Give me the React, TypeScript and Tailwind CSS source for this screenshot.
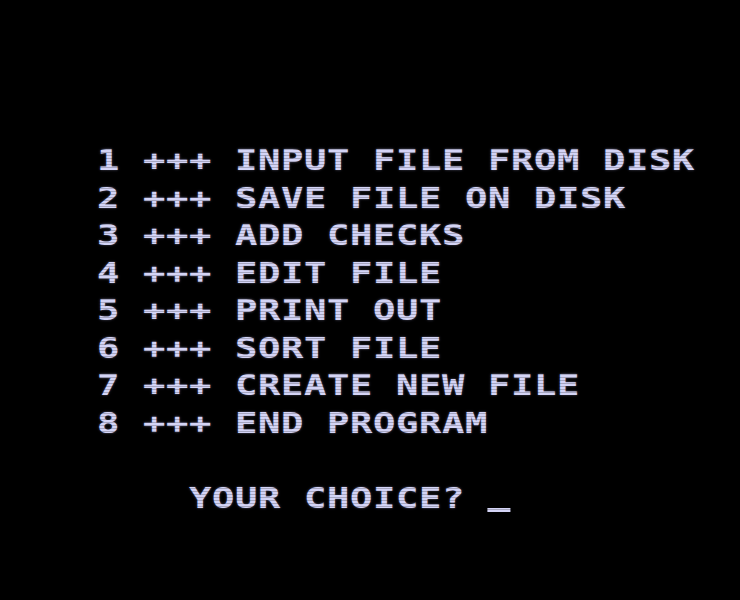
import React from 'react';

const menuItems = [
  'INPUT FILE FROM DISK',
  'SAVE FILE ON DISK',
  'ADD CHECKS',
  'EDIT FILE',
  'PRINT OUT',
  'SORT FILE',
  'CREATE NEW FILE',
  'END PROGRAM',
];

const App: React.FC = () => {
  return (
    <div className="relative w-[740px] h-[600px] bg-black overflow-hidden">
      <div className="pt-[142px] pl-[97px]">
        <div
          className="origin-left scale-x-[1.28] text-[#d4d4f6] text-[29px] leading-[37.5px] font-bold tracking-[0.51px] whitespace-pre [text-shadow:0_0_2px_rgba(200,200,255,0.5)]"
          style={{ fontFamily: '"DejaVu Sans Mono", "Liberation Mono", monospace' }}
        >
          {menuItems.map((label, i) => (
            <div key={label}>{`${i + 1} +++ ${label}`}</div>
          ))}
          <div>&nbsp;</div>
          <div>
            {'    YOUR CHOICE? '}
            <span className="inline-block w-[17.2px] h-[4px] bg-[#d4d4f6] align-[-4px]" />
          </div>
        </div>
      </div>
      <div className="pointer-events-none absolute inset-0 bg-[repeating-linear-gradient(to_bottom,transparent_0px,transparent_2px,rgba(0,0,0,0.22)_2px,rgba(0,0,0,0.22)_3px)]" />
    </div>
  );
};

export default App;
